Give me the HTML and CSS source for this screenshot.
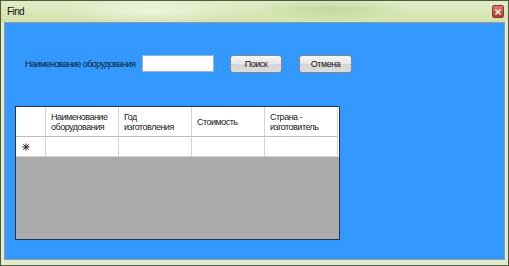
FILE: index.html
```html
<!DOCTYPE html>
<html>
<head>
  <title>Find</title>
  <link rel="stylesheet" href="styles.css">
</head>
<body>
  <div class="window">
    <div class="titlebar">
      <span class="title">Find</span>
      <div class="close-button">
        <svg width="6" height="6" viewBox="0 0 6 6">
          <path d="M0.5 0.5L5.5 5.5M5.5 0.5L0.5 5.5" stroke="#ffffff" stroke-width="1.4"/>
        </svg>
      </div>
    </div>

    <div class="client">
      <div class="search-row">
        <label class="search-label" for="equipmentName">Наименование оборудования</label>
        <input class="text-input" id="equipmentName" type="text">
        <button class="win-button search-button">Поиск</button>
        <button class="win-button cancel-button">Отмена</button>
      </div>

      <div class="data-grid">
        <div class="grid-row header-row">
          <div class="row-header"></div>
          <div class="cell">Наименование оборудования</div>
          <div class="cell">Год изготовления</div>
          <div class="cell">Стоимость</div>
          <div class="cell">Страна - изготовитель</div>
        </div>
        <div class="grid-row new-row">
          <div class="row-header">
            <svg width="8" height="8" viewBox="0 0 9 9">
              <path d="M4.5 0.5V8.5M0.5 4.5H8.5M1.5 1.5L7.5 7.5M7.5 1.5L1.5 7.5" stroke="#222222" stroke-width="1.1"/>
            </svg>
          </div>
          <div class="cell"></div>
          <div class="cell"></div>
          <div class="cell"></div>
          <div class="cell"></div>
        </div>
      </div>
    </div>
  </div>
</body>
</html>
```

FILE: styles.css
```css
:root {
  --frame: #e3ebcf;
  --frame-dark: #4c5a3e;
  --client-blue: #3399ff;
  --grid-empty: #ababab;
  --grid-border: #1c3450;
  --cell-line: #d4d4d4;
  --text: #1a1a1a;
  --font: 'Liberation Sans', Arial, sans-serif;
}

* {
  box-sizing: border-box;
  margin: 0;
  padding: 0;
}

body {
  width: 509px;
  height: 266px;
  font-family: var(--font);
  color: var(--text);
  background: #ffffff;
  overflow: hidden;
}

.window {
  width: 509px;
  height: 266px;
  display: flex;
  flex-direction: column;
  border: 1px solid var(--frame-dark);
  background: var(--frame);
  padding: 0 3px 5px 3px;
}

.titlebar {
  height: 21px;
  margin: 0 -3px;
  padding: 0 4px 0 6px;
  display: flex;
  align-items: center;
  justify-content: space-between;
  background:
    radial-gradient(ellipse 90px 14px at 150px 10px, rgba(255, 255, 255, 0.5), transparent),
    radial-gradient(ellipse 80px 12px at 330px 8px, rgba(170, 200, 130, 0.5), transparent),
    linear-gradient(to bottom, #e2edc8, #d2e2ad);
}

.title {
  font-size: 10px;
  letter-spacing: -0.6px;
  color: #111111;
}

.close-button {
  width: 12px;
  height: 13px;
  border: 1px solid #8a3a32;
  border-radius: 2px;
  background: linear-gradient(to bottom, #d97a6e, #b5392e);
  display: flex;
  align-items: center;
  justify-content: center;
}

.client {
  flex: 1;
  background: var(--client-blue);
  border: 1px solid #8f9aa6;
  display: flex;
  flex-direction: column;
}

/* Search row */
.search-row {
  display: flex;
  align-items: center;
  height: 19px;
  margin-top: 31px;
  padding-left: 20px;
}

.search-label {
  width: 117px;
  font-size: 9px;
  color: #0d2030;
  letter-spacing: -0.55px;
  white-space: nowrap;
}

.text-input {
  width: 72px;
  height: 17px;
  border: 1px solid #9ab4d0;
  background: #ffffff;
  margin-right: 16px;
}

.win-button {
  height: 18px;
  font-family: var(--font);
  font-size: 9px;
  letter-spacing: -0.5px;
  color: #111111;
  border: 1px solid #7f8a95;
  border-radius: 3px;
  background: linear-gradient(to bottom, #f6f6f6 0%, #e6e6e6 50%, #d6d6d6 51%, #dcdcdc 100%);
}

.search-button {
  width: 52px;
  margin-right: 17px;
}

.cancel-button {
  width: 53px;
}

/* Data grid */
.data-grid {
  width: 325px;
  height: 134px;
  margin: 33px 0 0 10px;
  border: 1px solid var(--grid-border);
  background: var(--grid-empty);
}

.grid-row {
  display: grid;
  grid-template-columns: 30px repeat(4, 73px);
  background: #ffffff;
}

.header-row {
  height: 30px;
}

.new-row {
  height: 20px;
}

.row-header,
.cell {
  border-right: 1px solid var(--cell-line);
  border-bottom: 1px solid var(--cell-line);
}

.row-header {
  display: flex;
  align-items: center;
  padding-left: 6px;
}

.header-row .cell {
  display: flex;
  align-items: center;
  padding: 0 4px 0 5px;
  font-size: 9px;
  line-height: 10px;
  letter-spacing: -0.5px;
  color: #1a1a1a;
}

.header-row .row-header,
.header-row .cell {
  border-bottom-color: #bdbdbd;
}
```
